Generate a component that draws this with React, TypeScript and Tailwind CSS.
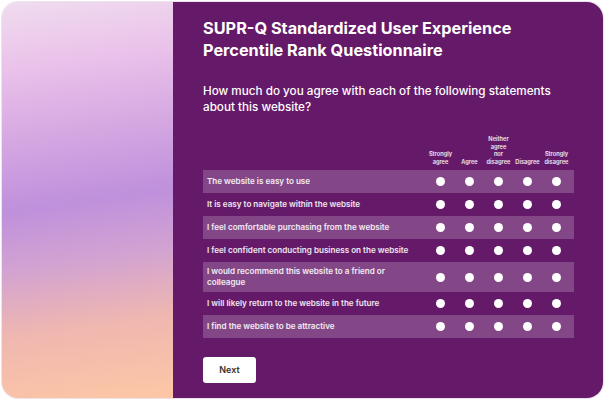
const statements = [
  { text: "The website is easy to use", shaded: true },
  { text: "It is easy to navigate within the website", shaded: false },
  { text: "I feel comfortable purchasing from the website", shaded: true },
  { text: "I feel confident conducting business on the website", shaded: false },
  { text: "I would recommend this website to a friend or\ncolleague", shaded: true },
  { text: "I will likely return to the website in the future", shaded: false },
  { text: "I find the website to be attractive", shaded: true },
];

const scale = [
  ["Strongly", "agree"],
  ["Agree"],
  ["Neither", "agree", "nor", "disagree"],
  ["Disagree"],
  ["Strongly", "disagree"],
];

export default function App() {
  return (
    <div className="w-[605px] h-[400px] bg-white p-[2px] font-['Inter',sans-serif]">
      {/* Card */}
      <div className="flex h-full w-full overflow-hidden rounded-[16px] ring-1 ring-[#ece3ef]">
        {/* Gradient side */}
        <div className="w-[171px] h-full bg-[linear-gradient(172deg,#f0dcef_0%,#eac2ea_16%,#d6a8e2_33%,#bf90dc_50%,#d2a2d2_64%,#efb7b0_80%,#fdc7a5_100%)]" />

        {/* Survey panel */}
        <div className="flex-1 bg-[#651a69] pl-[30px] pr-[29px] pt-[15px] text-white">
          <h1 className="text-[16.3px] leading-[22px] font-bold whitespace-nowrap">
            SUPR-Q Standardized User Experience
            <br />
            Percentile Rank Questionnaire
          </h1>

          <p className="mt-[22px] text-[11.7px] leading-[16px] font-medium whitespace-nowrap">
            How much do you agree with each of the following statements
            <br />
            about this website?
          </p>

          {/* Column headers */}
          <div className="mt-[20px] grid grid-cols-[1fr_repeat(5,29px)] pr-[3px] items-end">
            <div />
            {scale.map((lines, i) => (
              <div
                key={i}
                className="text-center text-[5.7px] leading-[7.5px] font-semibold text-white/90"
              >
                {lines.map((l) => (
                  <div key={l}>{l}</div>
                ))}
              </div>
            ))}
          </div>

          {/* Rows */}
          <div className="mt-[5px] flex flex-col">
            {statements.map((s) => (
              <div
                key={s.text}
                className={`grid grid-cols-[1fr_repeat(5,29px)] items-center pr-[3px] pl-[4px] min-h-[23px] ${
                  s.shaded ? "bg-white/20" : ""
                }`}
              >
                <div className="text-[8.1px] leading-[11px] font-semibold text-white/90 py-[4px] whitespace-pre">
                  {s.text}
                </div>
                {scale.map((_, i) => (
                  <div key={i} className="flex justify-center">
                    <span className="block w-[9px] h-[9px] rounded-full bg-white" />
                  </div>
                ))}
              </div>
            ))}
          </div>

          <button className="mt-[19px] w-[53px] h-[26px] rounded-[3px] bg-white text-[9px] font-semibold text-[#333333]">
            Next
          </button>
        </div>
      </div>
    </div>
  );
}
